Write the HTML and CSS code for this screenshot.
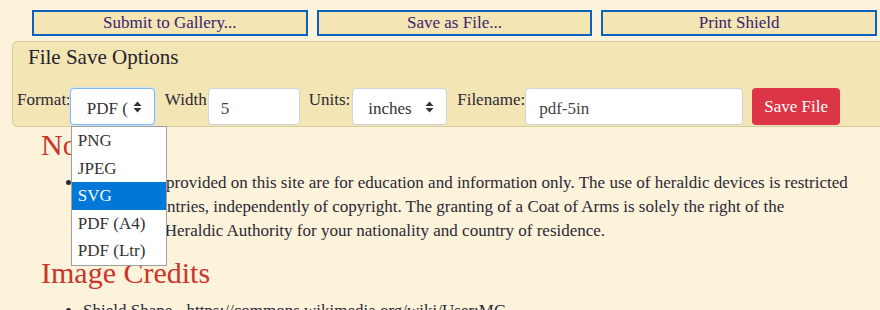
FILE: index.html
```html
<!DOCTYPE html>
<html>
<head>
  <meta charset="UTF-8">
  <title>Shield Designer</title>
  <link rel="stylesheet" href="styles.css">
</head>
<body>
  <div class="actions">
    <button class="act-btn">Submit to Gallery...</button>
    <button class="act-btn">Save as File...</button>
    <button class="act-btn">Print Shield</button>
  </div>

  <div class="save-panel">
    <div class="panel-title">File Save Options</div>
    <div class="save-row">
      <label>Format:</label>
      <div class="fake-select focused fmt">
        <span class="sel-text">PDF (</span>
        <svg class="sel-arrow" width="9" height="12" viewBox="0 0 9 12"><path d="M4.5 0.5 L8.5 5 H0.5 Z M0.5 7 H8.5 L4.5 11.5 Z" fill="#333"/></svg>
        <div class="dropdown">
          <div class="opt">PNG</div>
          <div class="opt">JPEG</div>
          <div class="opt active">SVG</div>
          <div class="opt">PDF (A4)</div>
          <div class="opt">PDF (Ltr)</div>
        </div>
      </div>
      <label>Width</label>
      <input class="field width-field" type="text" value="5">
      <label>Units:</label>
      <div class="fake-select units">
        <span class="sel-text">inches</span>
        <svg class="sel-arrow" width="9" height="12" viewBox="0 0 9 12"><path d="M4.5 0.5 L8.5 5 H0.5 Z M0.5 7 H8.5 L4.5 11.5 Z" fill="#333"/></svg>
      </div>
      <label>Filename:</label>
      <input class="field name-field" type="text" value="pdf-5in">
      <button class="save-btn">Save File</button>
    </div>
  </div>

  <div class="content">
    <h2>Notes</h2>
    <ul>
      <li>The images provided on this site are for education and information only. The use of heraldic devices is restricted in many countries, independently of copyright. The granting of a Coat of Arms is solely the right of the appropriate Heraldic Authority for your nationality and country of residence.</li>
    </ul>
    <h2>Image Credits</h2>
    <ul>
      <li>Shield Shape - https://commons.wikimedia.org/wiki/User:MG</li>
    </ul>
  </div>
</body>
</html>
```

FILE: styles.css
```css
body {
  margin: 0;
  background: #fcf3da;
  font-family: "Liberation Serif", "DejaVu Serif", serif;
  color: #2b2838;
  overflow: hidden;
}
.actions {
  display: grid;
  grid-template-columns: repeat(3, 1fr);
  gap: 9px;
  padding: 10px 3px 0 32px;
}
.act-btn {
  height: 26px;
  border: 2px solid #0a62bd;
  background: #f3e6b4;
  color: #3a2170;
  font-family: inherit;
  font-size: 17px;
  padding: 0;
}
.save-panel {
  margin: 5px -6px 0 12px;
  height: 84px;
  background: #f3e6b4;
  border: 1px solid #d9cc9c;
  border-radius: 5px;
}
.panel-title {
  font-size: 21px;
  padding: 3px 0 0 15px;
  height: 43px;
  color: #26232f;
}
.save-row {
  display: flex;
  align-items: flex-start;
  padding-left: 4px;
}
.save-row label {
  font-size: 17px;
  padding-top: 2px;
}
.fake-select {
  position: relative;
  height: 37px;
  box-sizing: border-box;
  background: #fff;
  border: 1px solid #ced4da;
  border-radius: 4px;
  display: flex;
  align-items: center;
  font-size: 17px;
  color: #333;
  margin-right: 10px;
}
.fake-select.focused {
  border-color: #86b7f5;
  box-shadow: 0 0 0 1px #cfe2fb;
}
.fmt {
  width: 85px;
  padding-left: 16px;
  margin-left: -1px;
}
.units {
  width: 95px;
  padding-left: 15px;
  margin-left: 2px;
}
.sel-text {
  flex: 1;
  min-width: 0;
  padding-top: 4px;
  overflow: hidden;
  white-space: nowrap;
}
.sel-arrow {
  flex: none;
  margin-right: 12px;
}
.field {
  height: 37px;
  box-sizing: border-box;
  border: 1px solid #ced4da;
  border-radius: 4px;
  background: #fff;
  font-family: inherit;
  font-size: 17px;
  color: #444;
  padding: 4px 12px 0;
  margin-right: 9px;
}
.width-field {
  width: 92px;
  margin-left: 1px;
}
.name-field {
  width: 218px;
  padding-left: 13px;
}
.save-btn {
  height: 37px;
  width: 88px;
  border: none;
  border-radius: 4px;
  background: #dc3545;
  color: #fff;
  font-family: inherit;
  font-size: 17px;
  padding: 0;
}
.dropdown {
  position: absolute;
  top: 37px;
  left: 0;
  width: 96px;
  box-sizing: border-box;
  background: #fff;
  border: 1px solid #a0a0a0;
  z-index: 5;
}
.opt {
  height: 27.6px;
  line-height: 27.6px;
  padding-left: 6px;
  color: #333;
  font-size: 17px;
}
.opt.active {
  background: #0078d7;
  color: #fff;
}
.content {
  padding-left: 41px;
}
.content h2 {
  font-weight: normal;
  font-size: 30px;
  color: #c9352b;
  margin: 0;
  line-height: 36px;
}
.content ul {
  margin: 8px 0 12px;
  padding-left: 42px;
  font-size: 17px;
  line-height: 24px;
  width: 774px;
}
```
